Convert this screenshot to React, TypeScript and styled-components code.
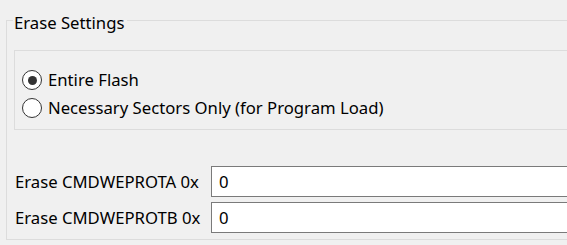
import React, { FunctionComponent, useState } from "react";
import styled, { createGlobalStyle } from "styled-components";

const GlobalStyle = createGlobalStyle`
  html, body {
    margin: 0;
    padding: 0;
    background: #f0f0f0;
    overflow: hidden;
  }
  body {
    font-family: "Noto Sans", "Open Sans", sans-serif;
    font-size: 16.7px;
    color: #000;
  }
`;

const Page = styled.div`
  width: 567px;
  height: 245px;
  padding-top: 6px;
  box-sizing: border-box;
`;

const GroupBox = styled.fieldset`
  margin: 0 -4px 0 6px;
  padding: 0 0 6px 7px;
  border: 1px solid #dcdcdc;
  border-right: none;
  min-width: 0;
`;

const Legend = styled.legend`
  padding: 6px 3px 0 1px;
  margin-left: -1px;
  line-height: 22px;
`;

const RadioPanel = styled.div`
  display: flex;
  flex-direction: column;
  gap: 8px;
  margin-top: 16px;
  padding: 19px 0 11px 7px;
  border: 1px solid #dcdcdc;
  border-right: none;
`;

const RadioRow = styled.label`
  display: flex;
  align-items: center;
  gap: 6px;
  height: 20px;
  line-height: 20px;
`;

const RadioInput = styled.input.attrs({ type: "radio" })`
  appearance: none;
  margin: 0;
  width: 20px;
  height: 20px;
  border: 1.5px solid #333;
  border-radius: 50%;
  background: #fff;
  box-sizing: border-box;
  display: grid;
  place-items: center;
  &:checked::after {
    content: "";
    width: 9px;
    height: 9px;
    border-radius: 50%;
    background: #333;
  }
`;

const Fields = styled.div`
  display: flex;
  flex-direction: column;
  gap: 5px;
  margin-top: 36px;
`;

const FieldRow = styled.div`
  display: flex;
  align-items: center;
`;

const FieldLabel = styled.span`
  width: 196px;
  padding-left: 1px;
  white-space: nowrap;
`;

const HexInput = styled.input`
  flex: 1;
  height: 31px;
  box-sizing: border-box;
  border: 1px solid #7a7a7a;
  border-right: none;
  background: #fff;
  font: inherit;
  padding: 0 0 0 7px;
  outline: none;
`;

const options = [
  "Entire Flash",
  "Necessary Sectors Only (for Program Load)",
];

const App: FunctionComponent = () => {
  const [mode, setMode] = useState(0);
  const [protA, setProtA] = useState("0");
  const [protB, setProtB] = useState("0");
  return (
    <Page>
      <GlobalStyle />
      <GroupBox>
        <Legend>Erase Settings</Legend>
        <RadioPanel>
          {options.map((text, i) => (
            <RadioRow key={text}>
              <RadioInput
                name="erase"
                checked={mode === i}
                onChange={() => setMode(i)}
              />
              {text}
            </RadioRow>
          ))}
        </RadioPanel>
        <Fields>
          <FieldRow>
            <FieldLabel>Erase CMDWEPROTA 0x</FieldLabel>
            <HexInput value={protA} onChange={(e) => setProtA(e.target.value)} />
          </FieldRow>
          <FieldRow>
            <FieldLabel>Erase CMDWEPROTB 0x</FieldLabel>
            <HexInput value={protB} onChange={(e) => setProtB(e.target.value)} />
          </FieldRow>
        </Fields>
      </GroupBox>
    </Page>
  );
};

export default App;
